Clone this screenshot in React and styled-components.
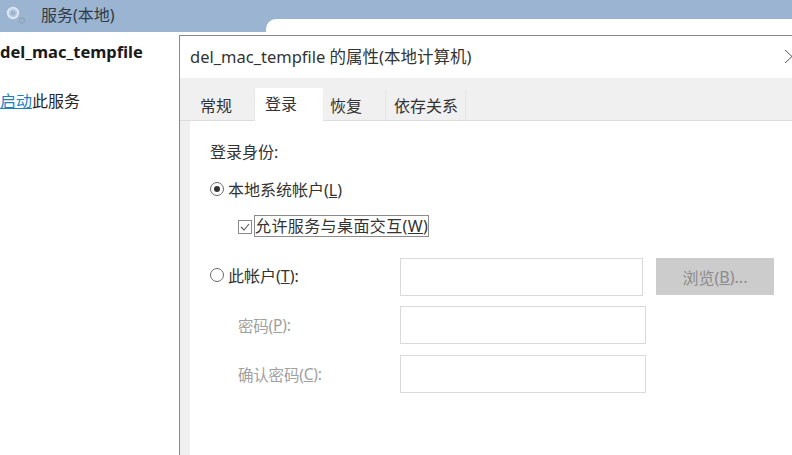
import React from 'react';

import styled, { createGlobalStyle } from 'styled-components';

const FONT = '"Noto Sans", "Noto Sans CJK SC", sans-serif';

const GlobalStyle = createGlobalStyle`
  html, body {
    margin: 0;
    padding: 0;
    width: 792px;
    height: 455px;
    overflow: hidden;
    background: #ffffff;
    font-family: ${FONT};
    color: #262626;
  }
`;

const Page = styled.div`
  width: 792px;
  height: 455px;
  display: flex;
  flex-direction: column;
  overflow: hidden;
`;

// Top blue bar
const Header = styled.header`
  height: 32px;
  flex: none;
  display: flex;
  align-items: stretch;
  background: #9ab4d1;
`;

const HeaderTitle = styled.div`
  display: flex;
  align-items: center;
  gap: 14px;
  width: 266px;
  height: 32px;
  padding: 0 0 5px 5px;
  box-sizing: border-box;
  font-size: 16px;
  color: #2f3a46;
`;

const GearSvg = styled.svg`
  flex: none;
  margin-top: 5px;
`;

const BlurredTab = styled.div`
  flex: 1;
  margin-top: 19px;
  background: #ffffff;
  border-top-left-radius: 10px;
`;

const Body = styled.div`
  flex: 1;
  display: flex;
  min-height: 0;
`;

// Left description column
const Sidebar = styled.aside`
  width: 179px;
  flex: none;
  padding-top: 9px;
  box-sizing: border-box;
`;

const ServiceName = styled.div`
  font-size: 16.5px;
  font-weight: 700;
  line-height: 21px;
  color: #1a1a1a;
  white-space: nowrap;
`;

const StartRow = styled.div`
  margin-top: 29px;
  font-size: 16px;
  line-height: 21px;
  color: #262626;
`;

const StartLink = styled.a`
  color: #1f7fc4;
  text-decoration: underline;
`;

// Properties dialog
const Dialog = styled.section`
  flex: 1;
  margin-top: 3px;
  display: flex;
  flex-direction: column;
  border-top: 1px solid #8a8a8a;
  border-left: 1px solid #8a8a8a;
  background: #f0f0f0;
  min-width: 0;
`;

const TitleBar = styled.div`
  height: 42px;
  flex: none;
  box-sizing: border-box;
  display: flex;
  align-items: center;
  justify-content: space-between;
  padding: 0 0 2px 10px;
  background: #ffffff;
  font-size: 16.5px;
  color: #333333;
  white-space: nowrap;
  overflow: hidden;
`;

const TabStrip = styled.div`
  height: 43px;
  flex: none;
  display: flex;
  align-items: flex-end;
  padding-left: 10px;
  box-sizing: border-box;
  border-bottom: 1px solid #dcdcdc;
`;

const Tab = styled.div`
  width: ${(props) => props.$width}px;
  height: ${(props) => (props.$active ? 33 : 30)}px;
  margin-bottom: ${(props) => (props.$active ? -1 : 0)}px;
  box-sizing: border-box;
  display: flex;
  align-items: center;
  padding-left: ${(props) => props.$pad}px;
  padding-bottom: ${(props) => (props.$active ? 3 : 0)}px;
  background: ${(props) => (props.$active ? '#ffffff' : '#f0f0f0')};
  border-right: 1px solid ${(props) => (props.$active ? '#ffffff' : '#e6e6e6')};
  font-size: 16px;
  color: #333333;
`;

const Content = styled.div`
  flex: 1;
  margin-left: 10px;
  padding: 19px 0 0 20px;
  background: #ffffff;
  font-size: 16px;
  color: #333333;
`;

const SectionLabel = styled.div`
  line-height: 24px;
`;

const Row = styled.div`
  display: flex;
  align-items: center;
  margin-top: ${(props) => props.$top || 0}px;
  padding-left: ${(props) => props.$indent || 0}px;
  height: ${(props) => props.$height || 24}px;
`;

const Radio = styled.span`
  width: 12px;
  height: 12px;
  flex: none;
  margin-right: 4px;
  border: 1px solid #6a6a6a;
  border-radius: 50%;
  display: flex;
  align-items: center;
  justify-content: center;
  &::after {
    content: '';
    display: ${(props) => (props.$checked ? 'block' : 'none')};
    width: 6px;
    height: 6px;
    border-radius: 50%;
    background: #333333;
  }
`;

const CheckBox = styled.svg`
  width: 14px;
  height: 14px;
  flex: none;
  margin: 2px 2px 0 0;
`;

const FocusLabel = styled.span`
  border: 1px solid #8c8c8c;
  line-height: 20px;
  letter-spacing: 0.4px;
  white-space: nowrap;
`;

const Key = styled.span`
  text-decoration: underline;
  text-underline-offset: 1px;
`;

const AccountGrid = styled.div`
  display: grid;
  grid-template-columns: 190px 243px 13px 118px;
  margin-top: 20px;
`;

const FieldLabel = styled.div`
  display: flex;
  align-items: center;
  height: 38px;
  box-sizing: border-box;
  padding-left: ${(props) => props.$indent || 0}px;
  padding-bottom: ${(props) => props.$lift || 0}px;
  color: ${(props) => (props.$disabled ? '#a0a0a0' : '#333333')};
  font-size: ${(props) => (props.$disabled ? 15.5 : 16)}px;
  letter-spacing: ${(props) => (props.$disabled ? '-0.2px' : '0')};
  white-space: pre;
`;

const Field = styled.div`
  height: 38px;
  width: ${(props) => props.$width || 243}px;
  box-sizing: border-box;
  border: 1px solid #dadada;
  background: #ffffff;
`;

const BrowseButton = styled.div`
  grid-column: 4;
  height: 37px;
  display: flex;
  align-items: center;
  justify-content: center;
  box-sizing: border-box;
  background: #cccccc;
  color: #8b8b8b;
  font-size: 16px;
  white-space: pre;
`;

const PasswordRow = styled.div`
  display: grid;
  grid-template-columns: 190px 246px;
  margin-top: ${(props) => props.$top}px;
`;

const tabs = [
  { label: '常规', width: 65, pad: 10 },
  { label: '登录', width: 68, pad: 10, active: true },
  { label: '恢复', width: 63, pad: 7 },
  { label: '依存关系', width: 80, pad: 8 },
];

function GearIcon() {
  return (
    <GearSvg width="22" height="22" viewBox="0 0 22 22">
      <circle cx="8" cy="8" r="5.2" fill="#b9cde2" stroke="#dbe6f1" strokeWidth="2" />
      <circle cx="8" cy="8" r="2.6" fill="#9ab4d1" />
      <circle cx="17" cy="15.5" r="2.5" fill="none" stroke="#8ea4bb" strokeWidth="1.3" />
    </GearSvg>
  );
}

export default function App() {
  return (
    <React.Fragment>
      <GlobalStyle />
      <Page>
        <Header>
          <HeaderTitle>
            <GearIcon />
            <span>服务(本地)</span>
          </HeaderTitle>
          <BlurredTab />
        </Header>
        <Body>
          <Sidebar>
            <ServiceName>del_mac_tempfile</ServiceName>
            <StartRow><StartLink>启动</StartLink>此服务</StartRow>
          </Sidebar>
          <Dialog>
            <TitleBar>
              <span>del_mac_tempfile 的属性(本地计算机)</span>
              <svg width="8" height="14" viewBox="0 0 8 14">
                <path d="M1 1 L8 7.5 M1 14 L8 7.5" stroke="#555555" strokeWidth="1" fill="none" />
              </svg>
            </TitleBar>
            <TabStrip>
              { tabs.map((tab) => {
                return (
                  <Tab key={tab.label} $width={tab.width} $pad={tab.pad} $active={tab.active}>
                    { tab.label }
                  </Tab>
                );
              }) }
            </TabStrip>
            <Content>
              <SectionLabel>登录身份:</SectionLabel>
              <Row $top={13}>
                <Radio $checked />
                <span>本地系统帐户(<Key>L</Key>)</span>
              </Row>
              <Row $top={13} $indent={28} $height={24}>
                <CheckBox viewBox="0 0 14 14">
                  <rect x="0.5" y="0.5" width="13" height="13" fill="#ffffff" stroke="#8a8a8a" />
                  <path d="M3 7 L6 10 L11 4" fill="none" stroke="#555555" strokeWidth="1.1" />
                </CheckBox>
                <FocusLabel>允许服务与桌面交互(<Key>W</Key>)</FocusLabel>
              </Row>
              <AccountGrid>
                <FieldLabel $lift={5}>
                  <Radio />
                  <span>此帐户(<Key>T</Key>):</span>
                </FieldLabel>
                <Field />
                <BrowseButton>浏览(<Key>B</Key>)...</BrowseButton>
              </AccountGrid>
              <PasswordRow $top={10}>
                <FieldLabel $indent={28} $disabled>密码(<Key>P</Key>):</FieldLabel>
                <Field $width={246} />
              </PasswordRow>
              <PasswordRow $top={11}>
                <FieldLabel $indent={28} $disabled>确认密码(<Key>C</Key>):</FieldLabel>
                <Field $width={246} />
              </PasswordRow>
            </Content>
          </Dialog>
        </Body>
      </Page>
    </React.Fragment>
  );
}
